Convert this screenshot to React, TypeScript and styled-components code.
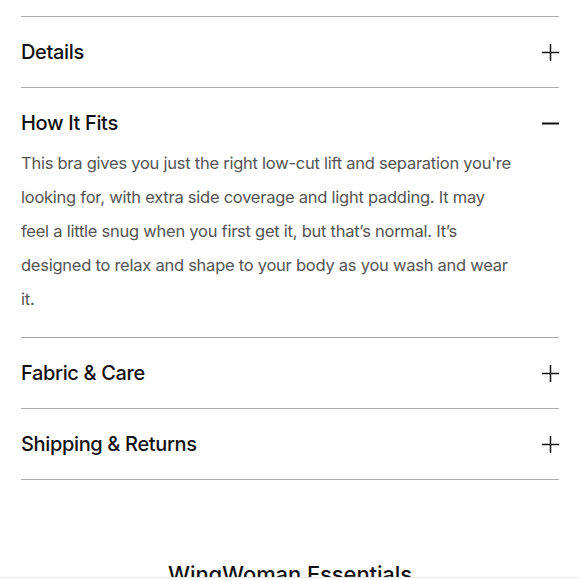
import styled, { createGlobalStyle } from "styled-components";
import { useState } from "react";

const GlobalStyle = createGlobalStyle`
  body {
    margin: 0;
    background: #fff;
    font-family: Inter, "Liberation Sans", Arial, sans-serif;
    color: #111;
  }
`;

const Page = styled.div`
  padding: 16px 20px 0 21px;
`;

const Item = styled.div`
  border-top: 1px solid #a9a9a9;
  &:last-child {
    border-bottom: 1px solid #a9a9a9;
  }
`;

const Header = styled.button`
  width: 100%;
  display: flex;
  align-items: center;
  justify-content: space-between;
  padding: 23px 0;
  border: none;
  background: none;
  cursor: pointer;
  font-family: inherit;
  color: #111;
`;

const Title = styled.span`
  font-size: 20px;
  line-height: 24px;
  font-weight: 500;
  letter-spacing: -0.35px;
`;

const Panel = styled.div`
  margin-top: -12px;
  padding-bottom: 21px;
`;

const Body = styled.p`
  margin: 0;
  max-width: 495px;
  font-size: 16.5px;
  line-height: 34px;
  color: #555;
  letter-spacing: -0.25px;
`;

const Heading = styled.h2`
  margin: 80px 0 0;
  text-align: center;
  font-size: 22px;
  line-height: 28px;
  font-weight: 500;
  letter-spacing: -0.1px;
  color: #111;
`;

const BottomEdge = styled.div`
  position: fixed;
  left: 0;
  right: 0;
  bottom: 0;
  height: 2px;
  background: #fff;
  border-top: 1px solid #e6e6e6;
`;

const Icon = ({ open }: { open: boolean }) => (
  <svg width="17" height="17" viewBox="0 0 17 17">
    <line x1="0" y1="8.5" x2="17" y2="8.5" stroke="#111" strokeWidth={open ? 2 : 1.5} />
    {!open && <line x1="8.5" y1="0" x2="8.5" y2="17" stroke="#111" strokeWidth="1.5" />}
  </svg>
);

const items = [
  { titulo: "Details", texto: "" },
  {
    titulo: "How It Fits",
    texto:
      "This bra gives you just the right low-cut lift and separation you're looking for, with extra side coverage and light padding. It may feel a little snug when you first get it, but that\u2019s normal. It\u2019s designed to relax and shape to your body as you wash and wear it.",
  },
  { titulo: "Fabric & Care", texto: "" },
  { titulo: "Shipping & Returns", texto: "" },
];

function App() {
  const [abierto, setAbierto] = useState<number>(1);

  return (
    <>
      <GlobalStyle />
      <Page>
        <div>
          {items.map((item, i) => (
            <Item key={i}>
              <Header onClick={() => setAbierto(abierto === i ? -1 : i)}>
                <Title>{item.titulo}</Title>
                <Icon open={abierto === i} />
              </Header>
              {abierto === i && (
                <Panel>
                  <Body>{item.texto}</Body>
                </Panel>
              )}
            </Item>
          ))}
        </div>
        <Heading>WingWoman Essentials</Heading>
      </Page>
      <BottomEdge />
    </>
  );
}

export default App;
